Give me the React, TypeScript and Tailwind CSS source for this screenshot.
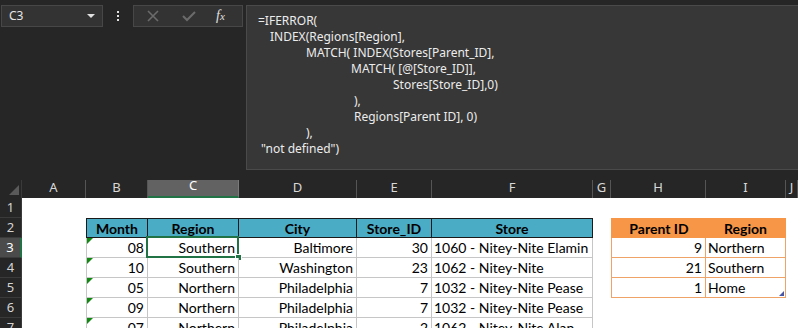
import React from 'react'

const UI = "font-['Noto_Sans','Open_Sans',sans-serif]"
const CELL = "font-['Lato','Liberation_Sans',sans-serif]"

const colLetters = ['A', 'B', 'C', 'D', 'E', 'F', 'G', 'H', 'I', 'J']

const formula: { indent: string; text: string }[] = [
    { indent: 'pl-[11px]', text: '=IFERROR(' },
    { indent: 'pl-[23px]', text: 'INDEX(Regions[Region],' },
    { indent: 'pl-[59px]', text: 'MATCH( INDEX(Stores[Parent_ID],' },
    { indent: 'pl-[104px]', text: 'MATCH( [@[Store_ID]],' },
    { indent: 'pl-[146px]', text: 'Stores[Store_ID],0)' },
    { indent: 'pl-[107px]', text: '),' },
    { indent: 'pl-[107px]', text: 'Regions[Parent ID], 0)' },
    { indent: 'pl-[59px]', text: '),' },
    { indent: 'pl-[14px]', text: '"not defined")' },
]

const rows = [
    { m: '08', r: 'Southern', c: 'Baltimore', id: '30', s: '1060 - Nitey-Nite Elamin' },
    { m: '10', r: 'Southern', c: 'Washington', id: '23', s: '1062 - Nitey-Nite' },
    { m: '05', r: 'Northern', c: 'Philadelphia', id: '7', s: '1032 - Nitey-Nite Pease' },
    { m: '09', r: 'Northern', c: 'Philadelphia', id: '7', s: '1032 - Nitey-Nite Pease' },
    { m: '07', r: 'Northern', c: 'Philadelphia', id: '2', s: '1062 - Nitey-Nite Alan' },
]

const lookup = [
    { id: '9', r: 'Northern' },
    { id: '21', r: 'Southern' },
    { id: '1', r: 'Home' },
]

function RowHeader({ n, active }: { n: number; active?: boolean }) {
    return (
        <div
            className={`h-[20px] flex items-center justify-center text-[13px] border-b border-[#3a3a3a] ${UI} ${
                active ? 'bg-[#4b4b4b] text-white border-r-2 border-r-[#217346]' : 'text-[#d4d4d4] border-r border-r-[#3a3a3a]'
            }`}
        >
            {n}
        </div>
    )
}

function Triangle() {
    return <span className="absolute top-0 left-0 w-0 h-0 border-t-[6px] border-t-[#128a12] border-r-[6px] border-r-transparent" />
}

export default function App() {
    return (
        <div className="w-[798px] h-[328px] overflow-hidden bg-[#262626]">
            {/* formula bar */}
            <div className="h-[180px] flex items-start pt-[5px]">
                <div className={`ml-[1px] w-[102px] h-[22px] bg-[#333333] border border-[#474747] flex items-center justify-between pl-[7px] pr-[7px] text-[12px] text-[#e6e6e6] ${UI}`}>
                    <span>C3</span>
                    <span className="w-0 h-0 border-l-[4px] border-l-transparent border-r-[4px] border-r-transparent border-t-[4px] border-t-[#e0e0e0]" />
                </div>
                <div className="w-[30px] h-[22px] flex flex-col items-center justify-center gap-[2px]">
                    <span className="w-[2px] h-[2px] bg-[#e0e0e0]" />
                    <span className="w-[2px] h-[2px] bg-[#e0e0e0]" />
                    <span className="w-[2px] h-[2px] bg-[#e0e0e0]" />
                </div>
                <div className="w-[110px] h-[22px] bg-[#333333] border border-[#474747] flex items-center">
                    <svg width="36" height="20" viewBox="0 0 36 20" className="ml-[1px]">
                        <path d="M13 5 L23 15 M23 5 L13 15" stroke="#6b6b6b" strokeWidth="1.6" fill="none" />
                    </svg>
                    <svg width="36" height="20" viewBox="0 0 36 20">
                        <path d="M12 10 L16 14 L24 6" stroke="#6b6b6b" strokeWidth="2" fill="none" />
                    </svg>
                    <span className="ml-[9px] text-[#e0e0e0] italic font-['Liberation_Serif',serif] text-[14px] leading-none">
                        f<span className="text-[11px]">x</span>
                    </span>
                </div>
                <div className="ml-[3px] flex-1 h-[165px] bg-[#373737] border-t border-l border-b border-[#4a4a4a] pt-[7px]">
                    {formula.map((l, i) => (
                        <div key={i} className={`h-[16px] leading-[16px] text-[12px] text-[#ececec] whitespace-pre ${UI} ${l.indent}`}>
                            {l.text}
                        </div>
                    ))}
                </div>
            </div>

            {/* sheet */}
            <div className="grid grid-cols-[22px_64px_62px_91px_118px_75px_161px_18px_95px_80px_12px]">
                {/* column headers */}
                <div className="relative h-[18px] border-r border-[#3a3a3a]">
                    <span className="absolute right-[2px] bottom-[3px] w-0 h-0 border-l-[10px] border-l-transparent border-b-[10px] border-b-[#5a5a5a]" />
                </div>
                {colLetters.map((c) => (
                    <div
                        key={c}
                        className={`h-[18px] flex items-end justify-center pb-[1px] text-[13px] ${UI} ${
                            c === 'C'
                                ? 'bg-[#626262] text-white border-b-2 border-[#217346] border-r border-r-[#7a7a7a]'
                                : 'text-[#d8d8d8] border-r border-[#555555]'
                        }`}
                    >
                        {c}
                    </div>
                ))}

                {/* row 1 */}
                <RowHeader n={1} />
                <div className="col-span-10 h-[20px] bg-white" />

                {/* row 2: headers */}
                <RowHeader n={2} />
                <div className="h-[20px] bg-white" />
                {['Month', 'Region', 'City', 'Store_ID', 'Store'].map((h, i) => (
                    <div
                        key={h}
                        className={`h-[20px] bg-[#4bacc6] border-t border-b border-r border-[#1a1a1a] flex items-center justify-center font-bold text-[14px] text-black ${CELL} ${
                            i === 0 ? 'border-l' : ''
                        }`}
                    >
                        {h}
                    </div>
                ))}
                <div className="h-[20px] bg-white" />
                <div className={`h-[20px] bg-[#f79646] border-l border-t border-[#f79646] flex items-center justify-center font-bold text-[14px] text-black ${CELL}`}>
                    Parent ID
                </div>
                <div className={`h-[20px] bg-[#f79646] border-r border-t border-[#f79646] flex items-center justify-center font-bold text-[14px] text-black ${CELL}`}>
                    Region
                </div>
                <div className="h-[20px] bg-white" />

                {/* data rows */}
                {rows.map((r, i) => {
                    const lk = lookup[i]
                    const last = i === lookup.length - 1
                    return (
                        <React.Fragment key={i}>
                            <RowHeader n={i + 3} active={i === 0} />
                            <div className="h-[20px] bg-white" />
                            <div className={`relative h-[20px] bg-white border-l border-r border-b border-[#c6c6c6] flex items-center justify-end pr-[3px] text-[14px] text-black ${CELL}`}>
                                <Triangle />
                                {r.m}
                            </div>
                            <div className={`relative h-[20px] bg-white border-r border-b border-[#c6c6c6] flex items-center justify-end pr-[3px] text-[14px] text-black ${CELL}`}>
                                {r.r}
                                {i === 0 && (
                                    <>
                                        <span className="absolute -left-[2px] -top-[2px] -right-[1px] -bottom-[1px] border-2 border-[#217346]" />
                                        <span className="absolute -right-[4px] -bottom-[4px] w-[7px] h-[7px] bg-[#217346] border border-white" />
                                    </>
                                )}
                            </div>
                            <div className={`h-[20px] bg-white border-r border-b border-[#c6c6c6] flex items-center justify-end pr-[3px] text-[14px] text-black ${CELL}`}>
                                {r.c}
                            </div>
                            <div className={`h-[20px] bg-white border-r border-b border-[#c6c6c6] flex items-center justify-end pr-[3px] text-[14px] text-black ${CELL}`}>
                                {r.id}
                            </div>
                            <div className={`h-[20px] bg-white border-r border-b border-[#c6c6c6] flex items-center pl-[2px] text-[14px] text-black whitespace-nowrap overflow-hidden ${CELL}`}>
                                {r.s}
                            </div>
                            <div className="h-[20px] bg-white" />
                            {lk ? (
                                <>
                                    <div className={`h-[20px] bg-white border-l border-r border-b border-[#f0a366] flex items-center justify-end pr-[3px] text-[14px] text-black ${CELL}`}>
                                        {lk.id}
                                    </div>
                                    <div className={`relative h-[20px] bg-white border-r border-b border-[#f0a366] flex items-center pl-[2px] text-[14px] text-black ${CELL}`}>
                                        {lk.r}
                                        {last && (
                                            <span className="absolute right-[1px] bottom-[1px] w-0 h-0 border-l-[5px] border-l-transparent border-b-[5px] border-b-[#4657a8]" />
                                        )}
                                    </div>
                                </>
                            ) : (
                                <div className="col-span-2 h-[20px] bg-white" />
                            )}
                            <div className="h-[20px] bg-white" />
                        </React.Fragment>
                    )
                })}
            </div>
        </div>
    )
}
